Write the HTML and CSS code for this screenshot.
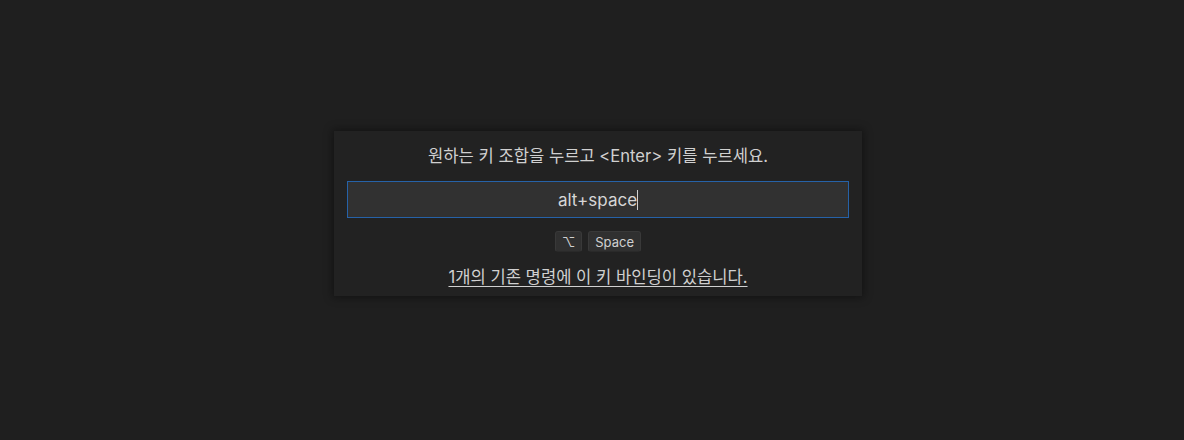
FILE: index.html
```html
<!DOCTYPE html>
<html lang="ko">
<head>
    <meta charset="UTF-8">
    <meta name="viewport" content="width=device-width, initial-scale=1.0">
    <title>키 바인딩</title>
    <link rel="stylesheet" href="styles.css">
</head>
<body>
    <div class="keybinding-dialog">
        <div class="dialog-message">원하는 키 조합을 누르고 &lt;Enter&gt; 키를 누르세요.</div>
        <div class="dialog-input">
            <span>alt+space</span><span class="caret"></span>
        </div>
        <div class="key-labels">
            <span class="key">⌥</span>
            <span class="key">Space</span>
        </div>
        <div class="dialog-footer">
            <a href="#">1개의 기존 명령에 이 키 바인딩이 있습니다.</a>
        </div>
    </div>
</body>
</html>
```

FILE: styles.css
```css
body {
    margin: 0;
    padding: 0;
    background-color: #1f1f1f;
    font-family: 'Inter', 'Noto Sans CJK KR', sans-serif;
    color: #cccccc;
    height: 440px;
    overflow: hidden;
}

.keybinding-dialog {
    width: 528px;
    box-sizing: border-box;
    margin: 131px 0 0 334px;
    padding: 14px 13px 8px;
    background-color: #222222;
    box-shadow: 0 0 8px 2px rgba(0, 0, 0, 0.36);
    display: flex;
    flex-direction: column;
    align-items: center;
}

.dialog-message {
    font-size: 16.6px;
    line-height: 22px;
    color: #d0d0d0;
}

.dialog-input {
    margin-top: 14px;
    width: 100%;
    height: 37px;
    box-sizing: border-box;
    border: 1px solid #2662a8;
    background-color: #313131;
    display: flex;
    align-items: center;
    justify-content: center;
    font-size: 17px;
    color: #d6d6d6;
}

.caret {
    display: inline-block;
    width: 1px;
    height: 20px;
    background-color: #d0d0d0;
}

.key-labels {
    margin-top: 13px;
    display: flex;
    gap: 6px;
}

.key {
    display: flex;
    align-items: center;
    justify-content: center;
    height: 21px;
    min-width: 27px;
    box-sizing: border-box;
    padding: 0 6px;
    border-radius: 3px;
    background-color: #303030;
    border: 1px solid #393939;
    border-bottom-color: #2a2a2a;
    font-size: 13px;
    color: #d0d0d0;
}

.dialog-footer {
    margin-top: 14px;
    font-size: 16.6px;
    line-height: 22px;
}

.dialog-footer a {
    color: #d0d0d0;
    text-decoration: underline;
    text-underline-offset: 3px;
}
```
